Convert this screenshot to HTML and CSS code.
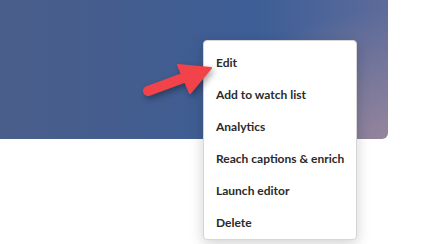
FILE: index.html
```html
<!DOCTYPE html>
<html lang="en">
<head>
    <meta charset="UTF-8">
    <title>Video menu</title>
    <link rel="stylesheet" href="styles.css">
</head>
<body>

    <div class="stage">
        <div class="banner"></div>

        <ul class="menu">
            <li>Edit</li>
            <li>Add to watch list</li>
            <li>Analytics</li>
            <li>Reach captions &amp; enrich</li>
            <li>Launch editor</li>
            <li>Delete</li>
        </ul>

        <svg class="pointer" width="80" height="50" viewBox="140 55 80 50">
            <line x1="148" y1="91" x2="186" y2="77" stroke="#f2434a" stroke-width="10" stroke-linecap="round"/>
            <polygon points="178,65 211,68 190,93" fill="#f2434a" stroke="#f2434a" stroke-width="2" stroke-linejoin="round"/>
        </svg>
    </div>

</body>
</html>
```

FILE: styles.css
```css
body {
    margin: 0;
    background-color: #ffffff;
    font-family: Lato, "Noto Sans", sans-serif;
}
.stage {
    position: relative;
    width: 434px;
    height: 244px;
    overflow: hidden;
}
.banner {
    width: 388px;
    height: 139px;
    border-bottom-right-radius: 6px;
    background:
        radial-gradient(ellipse 170px 130px at 388px 139px, rgba(152, 134, 156, 0.95), rgba(152, 134, 156, 0)),
        linear-gradient(90deg, #4a5e8a 0%, #415d91 45%, #3d5e97 66%, #5d6b9a 100%);
}
.menu {
    position: absolute;
    left: 203px;
    top: 40px;
    width: 152px;
    margin: 0;
    padding: 6px 0 0 0;
    list-style: none;
    background-color: #ffffff;
    border: 1px solid #d6d6d6;
    border-radius: 4px;
    box-shadow: 0 4px 14px rgba(0, 0, 0, 0.18);
}
.menu li {
    height: 32px;
    line-height: 32px;
    padding-left: 12px;
    font-size: 12px;
    font-weight: 700;
    color: #2a2a2a;
    white-space: nowrap;
}
.pointer {
    position: absolute;
    left: 140px;
    top: 55px;
    overflow: visible;
    filter: drop-shadow(2px 3px 3px rgba(0, 0, 0, 0.35));
}
```
